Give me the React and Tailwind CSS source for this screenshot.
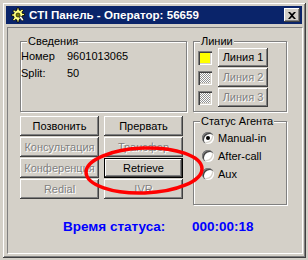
import React from 'react';

const bevel =
  'shadow-[inset_-1px_-1px_0_#404040,inset_1px_1px_0_#ffffff,inset_-2px_-2px_0_#808080]';
const sunken =
  'shadow-[inset_1px_1px_0_#808080,inset_2px_2px_0_#404040,inset_-1px_-1px_0_#ffffff,inset_-2px_-2px_0_#d4d0c8]';

function WinButton({ children, disabled, isDefault, className = '' }) {
  const text = disabled ? 'text-[#808080] [text-shadow:1px_1px_0_#ffffff]' : 'text-black';
  if (isDefault) {
    return (
      <div className={`border border-black bg-[#d4d0c8] ${className}`}>
        <div className={`flex h-full w-full items-center justify-center ${bevel} ${text}`}>{children}</div>
      </div>
    );
  }
  return (
    <div className={`flex items-center justify-center bg-[#d4d0c8] ${bevel} ${text} ${className}`}>
      {children}
    </div>
  );
}

function GroupBox({ title, className = '', children }) {
  return (
    <div className={`relative border border-[#808080] shadow-[1px_1px_0_#ffffff,inset_1px_1px_0_#ffffff] ${className}`}>
      <span className="absolute left-[6px] top-[-7px] bg-[#d4d0c8] px-[1px] leading-[13px]">{title}</span>
      {children}
    </div>
  );
}

function Swatch({ yellow }) {
  return (
    <div
      className={
        yellow
          ? `h-[14px] w-[14px] bg-[#ffff00] ${sunken}`
          : `h-[14px] w-[14px] p-[2px] bg-[#d4d0c8] ${sunken}`
      }
    >
      {!yellow && (
        <div className="h-full w-full bg-[repeating-conic-gradient(#909090_0%_25%,#ffffff_0%_50%)] bg-[length:2px_2px]" />
      )}
    </div>
  );
}

function Radio({ checked, label }) {
  return (
    <div className="flex h-[18px] items-center gap-[4px]">
      <div className={`flex h-[12px] w-[12px] items-center justify-center rounded-full bg-white ${sunken}`}>
        {checked && <div className="h-[4px] w-[4px] rounded-full bg-black" />}
      </div>
      <span>{label}</span>
    </div>
  );
}

function AppIcon() {
  return (
    <svg width="16" height="16" viewBox="0 0 16 16">
      <path
        d="M7 1h2v2l1.5.6 1.4-1.4 1.4 1.4-1.4 1.4.6 1.5h2v2h-2l-.6 1.5 1.4 1.4-1.4 1.4-1.4-1.4L9 13v2H7v-2l-1.5-.6-1.4 1.4-1.4-1.4 1.4-1.4L3.5 9h-2V7h2l.6-1.5-1.4-1.4 1.4-1.4 1.4 1.4L7 3z"
        fill="#ffff80"
        stroke="#000"
        strokeWidth="0.8"
      />
      <circle cx="8" cy="8" r="2" fill="#808000" stroke="#000" strokeWidth="0.6" />
      <path d="M9 10l3 4 2-1-3-4z" fill="#ffffff" stroke="#000" strokeWidth="0.6" />
    </svg>
  );
}

export default function App() {
  const btns = [
    ['Позвонить', false],
    ['Прервать', false],
    ['Консультация', true],
    ['Трансфер', true],
    ['Конференция', true],
    ['Retrieve', false, true],
    ['Redial', true],
    ['IVR', true],
  ];

  return (
    <div className="relative h-[260px] w-[308px] overflow-hidden bg-[#d4d0c8] pl-[2px] pt-[2px] font-['Liberation_Sans',Arial,sans-serif] text-[11px] text-black">
      <div className="h-[256px] w-[304px] bg-[#d4d0c8] p-[4px] shadow-[inset_1px_1px_0_#d4d0c8,inset_-1px_-1px_0_#404040,inset_2px_2px_0_#ffffff,inset_-2px_-2px_0_#808080]">
        {/* title bar */}
        <div className="flex h-[18px] items-center bg-[#0a246a] pl-[4px] pr-[2px]">
          <AppIcon />
          <span className="ml-[3px] flex-1 text-[11.6px] font-bold text-white">CTI Панель - Оператор: 56659</span>
          <div className={`flex h-[14px] w-[16px] items-center justify-center bg-[#d4d0c8] ${bevel}`}>
            <svg width="8" height="7" viewBox="0 0 8 7">
              <path d="M0 0h2l2 2 2-2h2L5 3.5 8 7H6L4 5 2 7H0l3-3.5z" fill="#000" />
            </svg>
          </div>
        </div>

        {/* body */}
        <div className="pl-[1px] pt-[3px]">
          <div className="h-[227px] w-[296px] border border-t-[#808080] border-l-[#808080] border-b-white border-r-white pl-[12px] pt-[13px]">
            <div className="flex gap-[6px]">
              <GroupBox title="Сведения" className="h-[71px] w-[167px]">
                <div className="pt-[6px]">
                  <div className="flex h-[17px] items-center">
                    <span className="w-[46px]">Номер</span>
                    <span>9601013065</span>
                  </div>
                  <div className="flex h-[17px] items-center">
                    <span className="w-[46px]">Split:</span>
                    <span>50</span>
                  </div>
                </div>
              </GroupBox>
              <GroupBox title="Линии" className="h-[71px] w-[94px]">
                <div className="flex flex-col gap-[1px] pl-[4px] pt-[6px]">
                  {['Линия 1', 'Линия 2', 'Линия 3'].map((l, i) => (
                    <div key={l} className="flex h-[19px] items-center gap-[6px]">
                      <Swatch yellow={i === 0} />
                      <WinButton disabled={i > 0} className="h-[19px] w-[50px]">
                        {l}
                      </WinButton>
                    </div>
                  ))}
                </div>
              </GroupBox>
            </div>

            <div className="mt-[4px] flex gap-[10px]">
              <div className="grid h-[83px] grid-cols-[79px_79px] grid-rows-[20px_20px_20px_20px] gap-x-[5px] gap-y-[1px]">
                {btns.map(([t, dis, def]) => (
                  <WinButton key={t} disabled={dis} isDefault={def}>
                    {t}
                  </WinButton>
                ))}
              </div>
              <GroupBox title="Статус Агента" className="mt-[5px] h-[84px] w-[94px]">
                <div className="pl-[8px] pt-[7px]">
                  <Radio checked label="Manual-in" />
                  <Radio label="After-call" />
                  <Radio label="Aux" />
                </div>
              </GroupBox>
            </div>

            <div className="mt-[10px] flex h-[24px] items-center pl-[43px] text-[13.5px] font-bold text-[#0000ff]">
              <span className="w-[129px]">Время статуса:</span>
              <span>000:00:18</span>
            </div>
          </div>
        </div>
      </div>

      <svg className="pointer-events-none absolute left-0 top-0" width="308" height="260">
        <ellipse cx="144" cy="170.5" rx="58" ry="22.5" fill="none" stroke="#ff0000" strokeWidth="3.5" transform="rotate(-2 144 170)" />
      </svg>
    </div>
  );
}
